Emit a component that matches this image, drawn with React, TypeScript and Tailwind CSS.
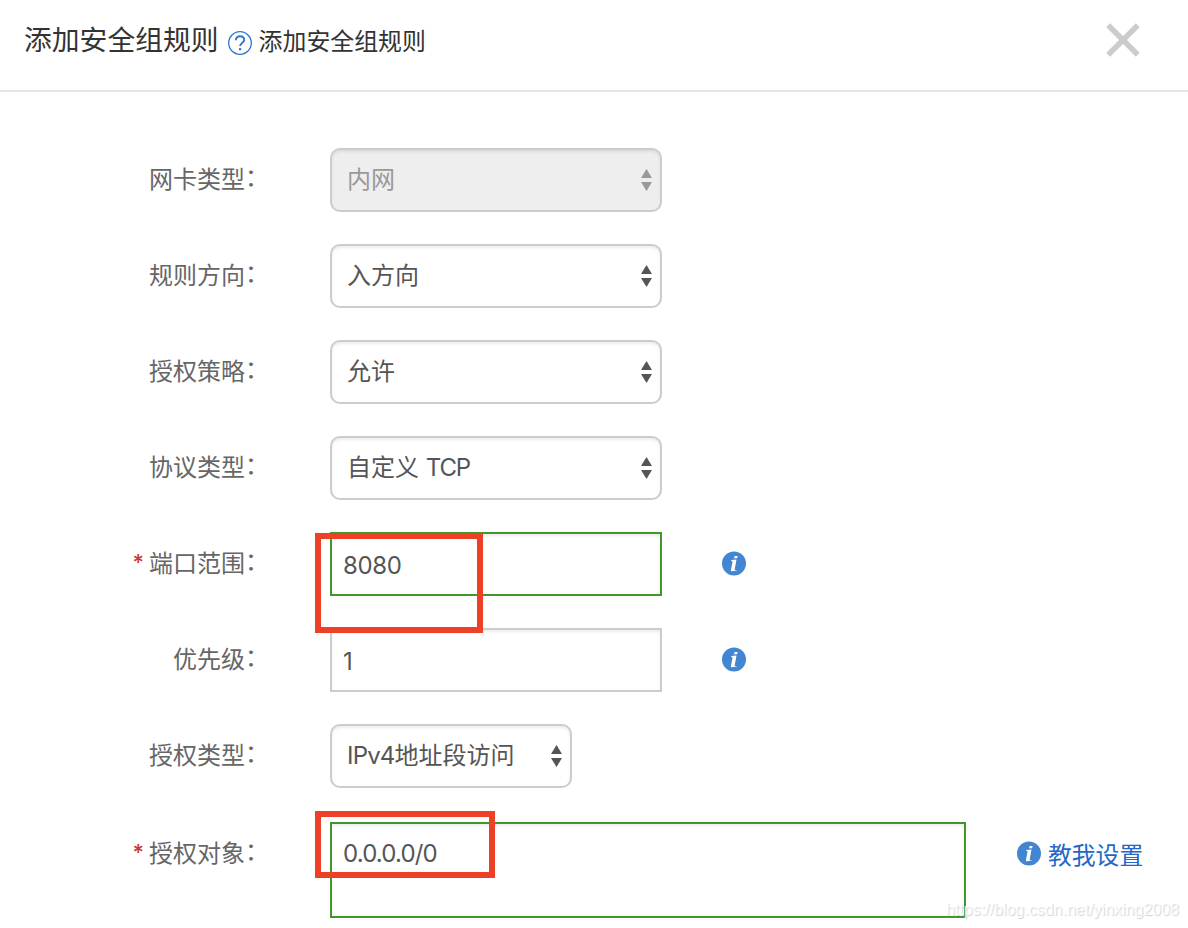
import type { ReactNode } from "react";
import clsx from "clsx";

interface RowProps {
  label: string;
  required?: boolean;
  children: ReactNode;
}

interface SelectBoxProps {
  value: ReactNode;
  disabled?: boolean;
  narrow?: boolean;
}

const selects = [
  { label: "网卡类型", value: "内网", disabled: true },
  { label: "规则方向", value: "入方向", disabled: false },
  { label: "授权策略", value: "允许", disabled: false },
  {
    label: "协议类型",
    value: (
      <>
        自定义 <span className="tracking-[-1.1px]">TCP</span>
      </>
    ),
    disabled: false,
  },
];

const Row = ({ label, required, children }: RowProps) => (
  <div className="flex">
    <div className="flex h-16 w-[269px] shrink-0 items-center justify-end whitespace-nowrap text-[#666]">
      {required && (
        <span className="mr-[5px] mb-[5px] font-['Inter'] text-[22px] font-medium text-[#c9392c]">*</span>
      )}
      <span>{label}</span>
      <span className="relative -top-0.5 w-6">：</span>
    </div>
    <div className="ml-[61px] flex">{children}</div>
  </div>
);

const Arrows = () => (
  <svg width="12" height="24" viewBox="0 0 12 24" fill="currentColor">
    <path d="M6.5 1L12 10H1Z" />
    <path d="M6.5 23L12 14H1Z" />
  </svg>
);

const SelectBox = ({ value, disabled, narrow }: SelectBoxProps) => (
  <div
    className={clsx(
      "flex h-16 items-center justify-between rounded-[10px] border-2 border-[#ccc] pr-2 pl-[15px] shadow-[inset_0_2px_3px_rgba(0,0,0,0.08)]",
      narrow ? "w-[242px]" : "w-[332px]",
      disabled ? "bg-[#eee] text-[#999]" : "bg-white text-[#555]"
    )}
  >
    <span className="whitespace-nowrap">{value}</span>
    <Arrows />
  </div>
);

const InfoIcon = () => (
  <svg width="24" height="25" viewBox="0 -0.5 24 25" className="shrink-0">
    <circle cx="12" cy="12" r="12" fill="#4285d1" />
    <path d="M12.6 4.6h3l-.5 2.2h-3z" fill="#fff" />
    <path d="M9.3 8.6l5.2-.5-1.8 9.9q-.1.8.6.7l1.2-.2-.1.7-4.9.6q-.8 0-.6-1l1.6-8.6q.1-.7-.6-.7H9.2z" fill="#fff" />
  </svg>
);

const HelpIcon = () => (
  <svg width="24" height="24" viewBox="0 0 24 24" fill="none" stroke="#2c77d1">
    <circle cx="12" cy="12" r="11.3" strokeWidth="1.3" />
    <path d="M7.9 9.2C7.9 6.7 9.7 5.2 12 5.2s4.2 1.4 4.2 3.6c0 3-4.1 3.2-4.1 6.3" strokeWidth="1.9" />
    <path d="M12.1 17.1v2.2" strokeWidth="2.2" />
  </svg>
);

const App = () => {
  return (
    <div className="relative h-[928px] w-[1188px] overflow-hidden bg-white font-['Inter','Noto_Sans_CJK_SC',sans-serif] text-2xl leading-9">
      <header className="flex h-[92px] items-start justify-between border-b-2 border-[#e5e5e5] pr-12 pl-6 text-[#333]">
        <div className="flex">
          <h1 className="mt-[22px] text-[27.8px]">添加安全组规则</h1>
          <div className="mt-[31px] ml-[9px]">
            <HelpIcon />
          </div>
          <span className="mt-6 ml-[7px] text-[23.9px]">添加安全组规则</span>
        </div>
        <button className="mt-[23px]">
          <svg width="34" height="34" viewBox="0 0 34 34" stroke="#ccc" strokeWidth="5.5">
            <path d="M2.2 2.2L31.8 31.8M31.8 2.2L2.2 31.8" />
          </svg>
        </button>
      </header>

      <main className="flex flex-col gap-8 pt-14">
        {selects.map((item) => (
          <Row key={item.label} label={item.label}>
            <SelectBox value={item.value} disabled={item.disabled} />
          </Row>
        ))}

        <Row label="端口范围" required>
          <div className="relative flex h-16 w-[332px] items-center border-2 border-[#43962b] pt-[3px] pl-[11px] tracking-[-0.4px] text-[#555] shadow-[inset_0_2px_3px_rgba(0,0,0,0.08)]">
            8080
            <div className="absolute top-[-1.5px] left-[-17px] z-10 h-[100px] w-[168px] border-[6px] border-[#ed4026]" />
          </div>
          <div className="mt-[19px] ml-[60px]">
            <InfoIcon />
          </div>
        </Row>

        <Row label="优先级">
          <div className="flex h-16 w-[332px] items-center border-2 border-[#ccc] pt-[3px] pl-[11px] text-[#555] shadow-[inset_0_2px_3px_rgba(0,0,0,0.08)]">
            1
          </div>
          <div className="mt-[19px] ml-[60px]">
            <InfoIcon />
          </div>
        </Row>

        <Row label="授权类型">
          <SelectBox
            value={
              <>
                <span className="tracking-[-0.8px]">IPv4</span>地址段访问
              </>
            }
            narrow
          />
        </Row>

        <div className="mt-0.5">
          <Row label="授权对象" required>
            <div className="relative h-24 w-[636px] border-2 border-[#43962b] pt-3 pl-[11px] tracking-[-0.85px] text-[#555] shadow-[inset_0_2px_3px_rgba(0,0,0,0.08)]">
              0.0.0.0/0
              <div className="absolute top-[-13px] left-[-17px] z-10 h-[67px] w-[180px] border-[6px] border-[#ed4026]" />
            </div>
            <div className="mt-[19px] ml-[51px] flex">
              <InfoIcon />
              <a className="-mt-[3px] ml-[7px] whitespace-nowrap text-[23.8px] text-[#2366c8]">教我设置</a>
            </div>
          </Row>
        </div>
      </main>

      {/* watermark */}
      <div className="absolute right-[9px] bottom-[6px] z-20 font-['Liberation_Sans',sans-serif] text-base leading-6 whitespace-nowrap text-white/80 [text-shadow:1px_1px_1px_rgba(0,0,0,0.18)]">
        https://blog.csdn.net/yinxing2008
      </div>
    </div>
  );
};

export default App;
